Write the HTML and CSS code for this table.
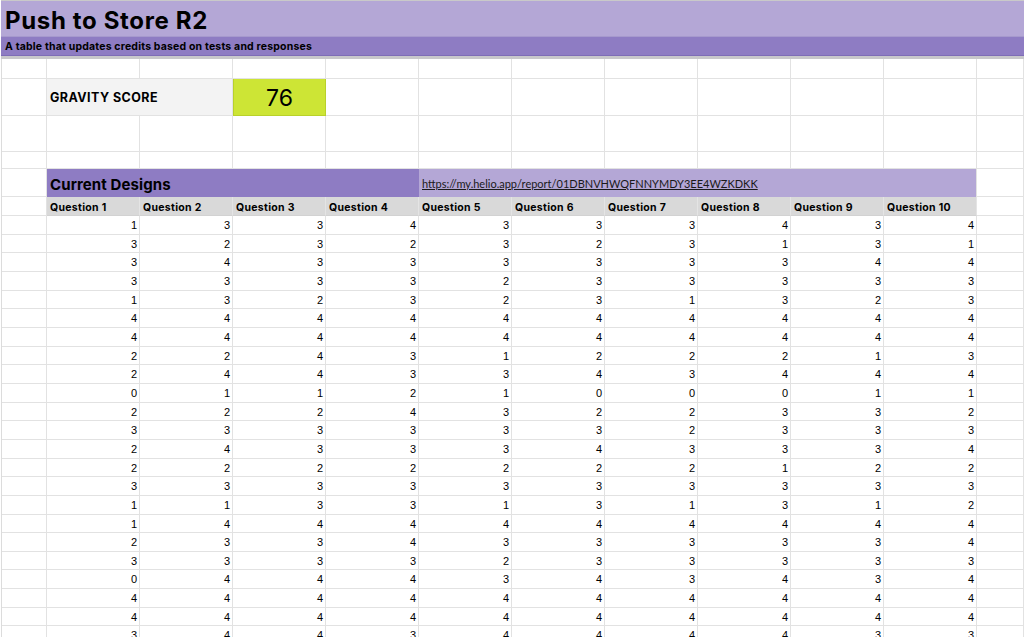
FILE: index.html
```html
<!DOCTYPE html>
<html lang="en">
<head>
<meta charset="utf-8">
<title>Push to Store R2</title>
<link rel="stylesheet" href="styles.css">
</head>
<body>
<header class="banner">
  <div class="title-band"><h1 class="title">Push to Store R2</h1></div>
  <div class="sub-band"><p class="subtitle">A table that updates credits based on tests and responses</p></div>
</header>
<main class="sheet">
  <div class="row r-blank1"><div class="c"></div><div class="c"></div><div class="c"></div><div class="c"></div><div class="c"></div><div class="c"></div><div class="c"></div><div class="c"></div><div class="c"></div><div class="c"></div><div class="c"></div><div class="c"></div></div>
  <div class="row r-score"><div class="c"></div><div class="c span2 score-label">GRAVITY SCORE</div><div class="c score-val">76</div><div class="c"></div><div class="c"></div><div class="c"></div><div class="c"></div><div class="c"></div><div class="c"></div><div class="c"></div><div class="c"></div></div>
  <div class="row r-blank2"><div class="c"></div><div class="c"></div><div class="c"></div><div class="c"></div><div class="c"></div><div class="c"></div><div class="c"></div><div class="c"></div><div class="c"></div><div class="c"></div><div class="c"></div><div class="c"></div></div>
  <div class="row r-blank3"><div class="c"></div><div class="c"></div><div class="c"></div><div class="c"></div><div class="c"></div><div class="c"></div><div class="c"></div><div class="c"></div><div class="c"></div><div class="c"></div><div class="c"></div><div class="c"></div></div>
  <div class="row r-section"><div class="c"></div><div class="c span4 section-title">Current Designs</div><div class="c span6 section-link"><a href="#">https://my.helio.app/report/01DBNVHWQFNNYMDY3EE4WZKDKK</a></div><div class="c"></div></div>
  <div class="row r-head"><div class="c"></div><div class="c h">Question 1</div><div class="c h">Question 2</div><div class="c h">Question 3</div><div class="c h">Question 4</div><div class="c h">Question 5</div><div class="c h">Question 6</div><div class="c h">Question 7</div><div class="c h">Question 8</div><div class="c h">Question 9</div><div class="c h">Question 10</div><div class="c"></div></div>
  <div class="row d"><div class="c"></div><div class="c">1</div><div class="c">3</div><div class="c">3</div><div class="c">4</div><div class="c">3</div><div class="c">3</div><div class="c">3</div><div class="c">4</div><div class="c">3</div><div class="c">4</div><div class="c"></div></div>
  <div class="row d"><div class="c"></div><div class="c">3</div><div class="c">2</div><div class="c">3</div><div class="c">2</div><div class="c">3</div><div class="c">2</div><div class="c">3</div><div class="c">1</div><div class="c">3</div><div class="c">1</div><div class="c"></div></div>
  <div class="row d"><div class="c"></div><div class="c">3</div><div class="c">4</div><div class="c">3</div><div class="c">3</div><div class="c">3</div><div class="c">3</div><div class="c">3</div><div class="c">3</div><div class="c">4</div><div class="c">4</div><div class="c"></div></div>
  <div class="row d"><div class="c"></div><div class="c">3</div><div class="c">3</div><div class="c">3</div><div class="c">3</div><div class="c">2</div><div class="c">3</div><div class="c">3</div><div class="c">3</div><div class="c">3</div><div class="c">3</div><div class="c"></div></div>
  <div class="row d"><div class="c"></div><div class="c">1</div><div class="c">3</div><div class="c">2</div><div class="c">3</div><div class="c">2</div><div class="c">3</div><div class="c">1</div><div class="c">3</div><div class="c">2</div><div class="c">3</div><div class="c"></div></div>
  <div class="row d"><div class="c"></div><div class="c">4</div><div class="c">4</div><div class="c">4</div><div class="c">4</div><div class="c">4</div><div class="c">4</div><div class="c">4</div><div class="c">4</div><div class="c">4</div><div class="c">4</div><div class="c"></div></div>
  <div class="row d"><div class="c"></div><div class="c">4</div><div class="c">4</div><div class="c">4</div><div class="c">4</div><div class="c">4</div><div class="c">4</div><div class="c">4</div><div class="c">4</div><div class="c">4</div><div class="c">4</div><div class="c"></div></div>
  <div class="row d"><div class="c"></div><div class="c">2</div><div class="c">2</div><div class="c">4</div><div class="c">3</div><div class="c">1</div><div class="c">2</div><div class="c">2</div><div class="c">2</div><div class="c">1</div><div class="c">3</div><div class="c"></div></div>
  <div class="row d"><div class="c"></div><div class="c">2</div><div class="c">4</div><div class="c">4</div><div class="c">3</div><div class="c">3</div><div class="c">4</div><div class="c">3</div><div class="c">4</div><div class="c">4</div><div class="c">4</div><div class="c"></div></div>
  <div class="row d"><div class="c"></div><div class="c">0</div><div class="c">1</div><div class="c">1</div><div class="c">2</div><div class="c">1</div><div class="c">0</div><div class="c">0</div><div class="c">0</div><div class="c">1</div><div class="c">1</div><div class="c"></div></div>
  <div class="row d"><div class="c"></div><div class="c">2</div><div class="c">2</div><div class="c">2</div><div class="c">4</div><div class="c">3</div><div class="c">2</div><div class="c">2</div><div class="c">3</div><div class="c">3</div><div class="c">2</div><div class="c"></div></div>
  <div class="row d"><div class="c"></div><div class="c">3</div><div class="c">3</div><div class="c">3</div><div class="c">3</div><div class="c">3</div><div class="c">3</div><div class="c">2</div><div class="c">3</div><div class="c">3</div><div class="c">3</div><div class="c"></div></div>
  <div class="row d"><div class="c"></div><div class="c">2</div><div class="c">4</div><div class="c">3</div><div class="c">3</div><div class="c">3</div><div class="c">4</div><div class="c">3</div><div class="c">3</div><div class="c">3</div><div class="c">4</div><div class="c"></div></div>
  <div class="row d"><div class="c"></div><div class="c">2</div><div class="c">2</div><div class="c">2</div><div class="c">2</div><div class="c">2</div><div class="c">2</div><div class="c">2</div><div class="c">1</div><div class="c">2</div><div class="c">2</div><div class="c"></div></div>
  <div class="row d"><div class="c"></div><div class="c">3</div><div class="c">3</div><div class="c">3</div><div class="c">3</div><div class="c">3</div><div class="c">3</div><div class="c">3</div><div class="c">3</div><div class="c">3</div><div class="c">3</div><div class="c"></div></div>
  <div class="row d"><div class="c"></div><div class="c">1</div><div class="c">1</div><div class="c">3</div><div class="c">3</div><div class="c">1</div><div class="c">3</div><div class="c">1</div><div class="c">3</div><div class="c">1</div><div class="c">2</div><div class="c"></div></div>
  <div class="row d"><div class="c"></div><div class="c">1</div><div class="c">4</div><div class="c">4</div><div class="c">4</div><div class="c">4</div><div class="c">4</div><div class="c">4</div><div class="c">4</div><div class="c">4</div><div class="c">4</div><div class="c"></div></div>
  <div class="row d"><div class="c"></div><div class="c">2</div><div class="c">3</div><div class="c">3</div><div class="c">4</div><div class="c">3</div><div class="c">3</div><div class="c">3</div><div class="c">3</div><div class="c">3</div><div class="c">4</div><div class="c"></div></div>
  <div class="row d"><div class="c"></div><div class="c">3</div><div class="c">3</div><div class="c">3</div><div class="c">3</div><div class="c">2</div><div class="c">3</div><div class="c">3</div><div class="c">3</div><div class="c">3</div><div class="c">3</div><div class="c"></div></div>
  <div class="row d"><div class="c"></div><div class="c">0</div><div class="c">4</div><div class="c">4</div><div class="c">4</div><div class="c">3</div><div class="c">4</div><div class="c">3</div><div class="c">4</div><div class="c">3</div><div class="c">4</div><div class="c"></div></div>
  <div class="row d"><div class="c"></div><div class="c">4</div><div class="c">4</div><div class="c">4</div><div class="c">4</div><div class="c">4</div><div class="c">4</div><div class="c">4</div><div class="c">4</div><div class="c">4</div><div class="c">4</div><div class="c"></div></div>
  <div class="row d"><div class="c"></div><div class="c">4</div><div class="c">4</div><div class="c">4</div><div class="c">4</div><div class="c">4</div><div class="c">4</div><div class="c">4</div><div class="c">4</div><div class="c">4</div><div class="c">4</div><div class="c"></div></div>
  <div class="row d"><div class="c"></div><div class="c">3</div><div class="c">4</div><div class="c">4</div><div class="c">3</div><div class="c">4</div><div class="c">4</div><div class="c">4</div><div class="c">4</div><div class="c">3</div><div class="c">3</div><div class="c"></div></div>
</main>
</body>
</html>
```
FILE: styles.css
```css
* { box-sizing: border-box; }
html, body { margin: 0; padding: 0; background: #ffffff; overflow: hidden; }
body { width: 1024px; height: 637px; font-family: "Inter", "Lato", "Liberation Sans", sans-serif; color: #000; }

.banner { border-top: 1px solid #c9c9c9; margin-left: 1px; }
.title-band { height: 36px; background: #b4a7d6; border-bottom: 1px solid #a699cd; display: flex; align-items: center; padding-left: 4px; padding-top: 5px; }
.title { margin: 0; font-size: 24px; font-weight: 700; line-height: 1; letter-spacing: 0.65px; }
.sub-band { height: 19px; background: #8e7cc3; border-bottom: 1px solid #7e6db6; display: flex; align-items: center; padding-left: 4px; padding-top: 3px; }
.subtitle { margin: 0; font-size: 10.5px; font-weight: 700; line-height: 1; letter-spacing: 0.18px; }
.banner::after { content: ""; display: block; height: 3px; background: #c8c8cb; }

.sheet { margin-left: 1px; border-left: 1px solid #dcdcdc; }
.row { display: grid; grid-template-columns: 45px repeat(10, 93px) 1fr; }
.c { border-right: 1px solid #e2e2e2; border-bottom: 1px solid #e2e2e2; min-width: 0; overflow: hidden; white-space: nowrap; }
.span2 { grid-column: span 2; }
.span4 { grid-column: span 4; }
.span6 { grid-column: span 6; }

.r-blank1 { height: 20px; }
.r-score { height: 37px; }
.r-blank2 { height: 36px; }
.r-blank3 { height: 17px; }

.score-label { background: #f3f3f3; display: flex; align-items: center; padding-left: 3px; padding-top: 1px; font-size: 12.5px; font-weight: 700; letter-spacing: 0.45px; }
.score-val { background: #cde535; border: 1px solid #b9d12a; border-top: none; display: flex; align-items: center; justify-content: center; font-size: 23px; font-weight: 400; padding-top: 2px; }

.r-section { height: 28px; }
.section-title { background: #8e7cc3; border-right-color: #8e7cc3; border-bottom: none; display: flex; align-items: center; padding-left: 3px; padding-top: 2px; font-size: 15px; font-weight: 700; letter-spacing: 0.1px; }
.section-link { background: #b4a7d6; border-bottom: none; display: flex; align-items: center; padding-left: 3px; font-family: "Lato", "Liberation Sans", sans-serif; font-size: 11px; }
.section-link a { color: #1a1a1a; text-decoration: underline; }

.r-head { height: 19px; }
.h { background: #d9d9d9; border-right-color: #e4e4e4; border-bottom-color: #d2d2d2; display: flex; align-items: center; padding-left: 3px; padding-top: 2px; font-size: 10.5px; font-weight: 700; letter-spacing: 0.3px; }

.d { height: 18.667px; }
.d .c { font-family: "Liberation Sans", Arial, sans-serif; font-size: 11px; text-align: right; padding-right: 2px; line-height: 19px; }
```
